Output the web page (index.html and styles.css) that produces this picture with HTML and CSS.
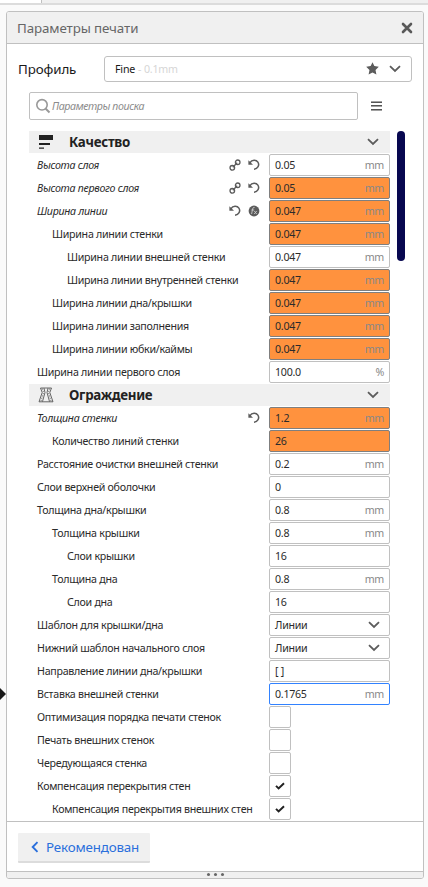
FILE: index.html
```
<!DOCTYPE html>
<html lang="ru">
<head>
<meta charset="utf-8">
<title>Параметры печати</title>
<link rel="stylesheet" href="styles.css">
</head>
<body>
<svg class="defs" width="0" height="0">
  <symbol id="chev" viewBox="0 0 12 8"><path d="M1 1.2 6 6l5-4.8" fill="none" stroke="currentColor" stroke-width="1.8"/></symbol>
  <symbol id="link" viewBox="0 0 12 12"><g fill="none" stroke="currentColor" stroke-width="1.3"><circle cx="3.3" cy="8.8" r="2.3"/><circle cx="8.700" cy="3.300" r="2.300"/><path d="M3.800 8.300 8.200 3.800"/></g></symbol>
  <symbol id="undo" viewBox="0 0 12 12"><path d="M1.800 3.800C4 .6 8.200.6 9.900 3.200 11.800 6.200 9.800 9.800 6 10.200" fill="none" stroke="currentColor" stroke-width="1.5"/><path d="M.4 1.2v4.600H5z" fill="currentColor"/></symbol>
  <symbol id="fx" viewBox="0 0 12 12"><circle cx="6" cy="6" r="5.4" fill="currentColor"/><path d="M6.6 2.4Q5 2 4.6 4L3.6 9M3.4 5h2.8M6.3 6l2.4 3M8.7 6 6.2 9" fill="none" stroke="#ccc" stroke-width=".9"/></symbol>
  <symbol id="check" viewBox="0 0 10 8"><path d="M1 3.9 3.6 6.4 9 1.2" fill="none" stroke="currentColor" stroke-width="2"/></symbol>
</svg>
<div class="tabs"><div class="tab"></div></div>
<div class="pointer"></div>
<main class="panel">
  <header class="title"><span>Параметры печати</span>
    <svg class="close" viewBox="0 0 12 12"><path d="m2 2 8 8M10 2l-8 8" stroke="currentColor" stroke-width="2.6" stroke-linecap="round"/></svg>
  </header>
  <div class="profile">
    <span class="profile-label">Профиль</span>
    <div class="profile-box"><span>Fine</span><span class="faint">- 0.1mm</span>
      <svg class="star" viewBox="0 0 12 12"><path d="m6 .2 1.7 3.6 4.1.6-3 2.9.8 4.3L6 9.7l-3.6 1.9.8-4.3-3-2.9 4.1-.6z" fill="currentColor"/></svg>
      <svg class="chev"><use href="#chev"/></svg>
    </div>
  </div>
  <div class="search-row">
    <div class="search">
      <svg viewBox="0 0 16 16"><circle cx="7" cy="6.8" r="5.200" fill="none" stroke="currentColor" stroke-width="1.6"/><path d="m10.5 10.5 4 4" stroke="currentColor" stroke-width="2"/></svg>
      <span>Параметры поиска</span>
    </div>
    <svg class="menu" viewBox="0 0 11 10"><path d="M0 1.500h11M0 4.500h11M0 8.500h11" stroke="currentColor" stroke-width="1"/><path d="M0 .500h11M0 5.500h11M0 9.500h11" stroke="currentColor" stroke-width="1" opacity=".55"/></svg>
  </div>
  <div class="content">
    <div class="list">
      <h2 class="section"><svg class="cat" viewBox="0 0 16 16"><path d="M1 1h14v5H1zM1 9h11v2H1zM1 13.6h5v1.2H1z" fill="#222"/></svg><span>Качество</span><svg class="chev"><use href="#chev"/></svg></h2>
      <div class="row"><span class="label changed">Высота слоя</span><svg class="ico"><use href="#link"/></svg><svg class="ico"><use href="#undo"/></svg><div class="field"><span>0.05</span><i>mm</i></div></div>
      <div class="row"><span class="label changed">Высота первого слоя</span><svg class="ico"><use href="#link"/></svg><svg class="ico"><use href="#undo"/></svg><div class="field warn"><span>0.05</span><i>mm</i></div></div>
      <div class="row"><span class="label changed">Ширина линии</span><svg class="ico"><use href="#undo"/></svg><svg class="ico"><use href="#fx"/></svg><div class="field warn"><span>0.047</span><i>mm</i></div></div>
      <div class="row in1"><span class="label">Ширина линии стенки</span><div class="field warn"><span>0.047</span><i>mm</i></div></div>
      <div class="row in2"><span class="label">Ширина линии внешней стенки</span><div class="field"><span>0.047</span><i>mm</i></div></div>
      <div class="row in2"><span class="label">Ширина линии внутренней стенки</span><div class="field warn"><span>0.047</span><i>mm</i></div></div>
      <div class="row in1"><span class="label">Ширина линии дна/крышки</span><div class="field warn"><span>0.047</span><i>mm</i></div></div>
      <div class="row in1"><span class="label">Ширина линии заполнения</span><div class="field warn"><span>0.047</span><i>mm</i></div></div>
      <div class="row in1"><span class="label">Ширина линии юбки/каймы</span><div class="field warn"><span>0.047</span><i>mm</i></div></div>
      <div class="row"><span class="label">Ширина линии первого слоя</span><div class="field"><span>100.0</span><i>%</i></div></div>
      <h2 class="section"><svg class="cat" viewBox="0 0 16 16"><path d="M2.500 1h11M1 14.800h14M2.500 1l1.700 4.500L1 14.800M13.500 1l-1.700 4.500 3.200 9.300M6 1.200l1 4.300-2.500 9M10 1.200l-1 4.300 2.500 9" fill="none" stroke="#444" stroke-width=".8"/><path d="m4.300 1.500 1.300 4-2.800 9M11.700 1.500l-1.300 4 2.800 9" fill="none" stroke="#555" stroke-width=".8" stroke-dasharray="1.2 1.2"/></svg><span>Ограждение</span><svg class="chev"><use href="#chev"/></svg></h2>
      <div class="row"><span class="label changed">Толщина стенки</span><svg class="ico"><use href="#undo"/></svg><div class="field warn"><span>1.2</span><i>mm</i></div></div>
      <div class="row in1"><span class="label">Количество линий стенки</span><div class="field warn"><span>26</span></div></div>
      <div class="row"><span class="label">Расстояние очистки внешней стенки</span><div class="field"><span>0.2</span><i>mm</i></div></div>
      <div class="row"><span class="label">Слои верхней оболочки</span><div class="field"><span>0</span></div></div>
      <div class="row"><span class="label">Толщина дна/крышки</span><div class="field"><span>0.8</span><i>mm</i></div></div>
      <div class="row in1"><span class="label">Толщина крышки</span><div class="field"><span>0.8</span><i>mm</i></div></div>
      <div class="row in2"><span class="label">Слои крышки</span><div class="field"><span>16</span></div></div>
      <div class="row in1"><span class="label">Толщина дна</span><div class="field"><span>0.8</span><i>mm</i></div></div>
      <div class="row in2"><span class="label">Слои дна</span><div class="field"><span>16</span></div></div>
      <div class="row"><span class="label">Шаблон для крышки/дна</span><div class="field"><span>Линии</span><svg class="chev"><use href="#chev"/></svg></div></div>
      <div class="row"><span class="label">Нижний шаблон начального слоя</span><div class="field"><span>Линии</span><svg class="chev"><use href="#chev"/></svg></div></div>
      <div class="row"><span class="label">Направление линии дна/крышки</span><div class="field"><span>[ ]</span></div></div>
      <div class="row"><span class="label">Вставка внешней стенки</span><div class="field focus"><span>0.1765</span><i>mm</i></div></div>
      <div class="row"><span class="label">Оптимизация порядка печати стенок</span><div class="box"></div></div>
      <div class="row"><span class="label">Печать внешних стенок</span><div class="box"></div></div>
      <div class="row"><span class="label">Чередующаяся стенка</span><div class="box"></div></div>
      <div class="row"><span class="label">Компенсация перекрытия стен</span><div class="box"><svg><use href="#check"/></svg></div></div>
      <div class="row in1"><span class="label">Компенсация перекрытия внешних стен</span><div class="box"><svg><use href="#check"/></svg></div></div>
    </div>
    <div class="scroll"></div>
  </div>
  <footer class="footer"><div class="btn"><svg viewBox="0 0 8 12"><path d="M6.500 1.200 1.700 6l4.800 4.800" fill="none" stroke="currentColor" stroke-width="1.900"/></svg><span>Рекомендован</span></div></footer>
  <div class="grip"><b></b><b></b><b></b></div>
</main>
</body>
</html>
```
FILE: styles.css
```
* { box-sizing: border-box; }
body { margin: 0; height: 887px; overflow: hidden; background: #fafafa; font-family: "Noto Sans", sans-serif; font-size: 10.67px; letter-spacing: -.28px; color: #2b2b2b; position: relative; }
.defs { position: absolute; }
svg { display: block; flex: none; }
.tabs { height: 5px; background: #f0f0f0; border-bottom: 2px solid #dcdcdc; }
.tab { width: 42px; height: 3px; background: #fff; border-right: 1px solid #c0c0c0; }
.pointer { position: absolute; left: 0; top: 688px; border: solid transparent; border-width: 6px 0 6px 6px; border-left-color: #191919; }
.panel { margin: 6px 4px 0 6px; width: 418px; height: 868px; border: 1px solid #c0c0c0; border-radius: 3px; background: #fff; display: flex; flex-direction: column; overflow: hidden; }
.title { height: 32px; flex: none; background: #f0f0f0; border-bottom: 1px solid #c0c0c0; display: flex; align-items: center; justify-content: space-between; padding: 1px 10px 0 10px; font-size: 13.33px; letter-spacing: -.1px; color: #666; }
.close { width: 12px; height: 12px; color: #595959; margin-top: -1px; }
.profile { display: flex; align-items: center; height: 26px; margin: 12px 11px 0 11px; flex: none; }
.profile-label { width: 86px; font-size: 13.33px; letter-spacing: -.1px; color: #191919; }
.profile-box { flex: 1; height: 26px; border: 1px solid #c0c0c0; border-radius: 3px; display: flex; align-items: center; padding: 0 10px; gap: 3px; letter-spacing: -.2px; color: #191919; }
.faint { color: #d6d6d6; flex: 1; }
.star { width: 13px; height: 13px; color: #5c5c5c; margin: -2px 7px 0 0; }
.chev { width: 12px; height: 8px; color: #5c5c5c; }
.search-row { display: flex; align-items: center; height: 28px; margin: 10px 0 0 22px; flex: none; }
.search { width: 329px; height: 28px; border: 1px solid #c0c0c0; border-radius: 2px; display: flex; align-items: center; padding: 0 0 1px 5px; gap: 1px; color: #8c8c8c; font-style: italic; letter-spacing: -.4px; }
.search svg { width: 16px; height: 16px; color: #999; }
.menu { width: 11px; height: 10px; color: #555; margin: -1px 0 0 13px; }
.content { display: flex; margin: 11px 0 0 22px; height: 690px; flex: none; }
.list { width: 361px; }
.section { margin: 0 0 1px; height: 22px; background: #f0f0f0; display: flex; align-items: center; padding: 0 11px 0 9px; font-size: 13.33px; font-weight: 700; color: #222; }
.section .cat { width: 16px; height: 16px; margin-right: 15px; }
.section span { flex: 1; }
.row { height: 22px; margin-bottom: 1px; padding-left: 8px; display: flex; align-items: center; }
.in1 { padding-left: 23px; }
.in2 { padding-left: 38px; }
.label { flex: 1; white-space: nowrap; padding-bottom: 1px; }
.changed { font-style: italic; }
.ico { width: 12px; height: 12px; color: #5c5c5c; margin-right: 7px; }
.ico + .field { margin-left: 2px; }
.field { width: 121px; height: 22px; border: 1px solid #c0c0c0; border-radius: 2px; padding: 0 5px; display: flex; align-items: center; justify-content: space-between; }
.field span, .field i { padding-bottom: 1px; }
.field i { font-style: normal; color: #888; }
.field .chev { margin-right: 4px; }
.warn { background: #ff923e; border-color: #7f7f7f; }
.focus { border-color: #3282ff; }
.box { width: 22px; height: 22px; border: 1px solid #c0c0c0; border-radius: 2px; margin-right: 99px; display: flex; align-items: center; justify-content: center; }
.box svg { width: 10px; height: 8px; color: #222; }
.scroll { width: 8px; height: 130px; border-radius: 4px; background: #080850; margin-left: 7px; }
.footer { height: 50px; flex: none; border-top: 1px solid #c0c0c0; padding: 11px 0 0 11px; }
.btn { width: 132px; height: 30px; background: #f0f0f0; border-bottom: 2px solid #dcdcdc; border-radius: 1px; display: flex; align-items: center; gap: 7px; padding-left: 13px; color: #2a6fdc; font-size: 13.33px; letter-spacing: -.15px; }
.btn svg { width: 8px; height: 12px; }
.grip { flex: 1; background: #f0f0f0; border-top: 1px solid #c0c0c0; display: flex; justify-content: center; align-items: flex-start; padding-top: 1px; gap: 4px; }
.grip b { width: 3px; height: 3px; border-radius: 2px; background: #666; }
```
